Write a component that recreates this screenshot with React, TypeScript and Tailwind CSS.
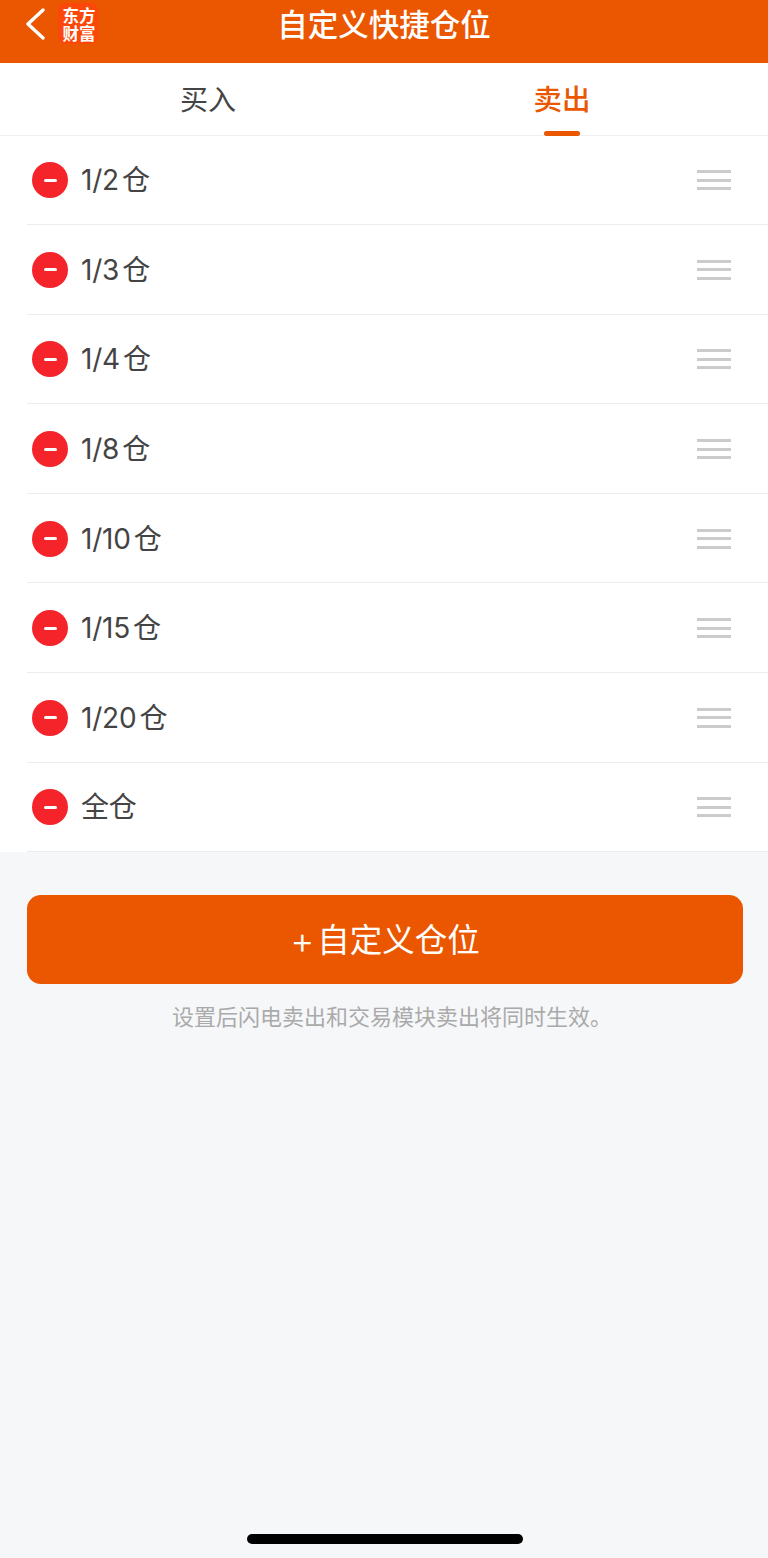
const font = { fontFamily: '"Inter", "Noto Sans CJK SC", sans-serif' };

const rows = ["1/2", "1/3", "1/4", "1/8", "1/10", "1/15", "1/20", "全"];

function Row({ label }: { label: string }) {
  return (
    <div className="ml-[27px] flex h-[89.6px] items-center border-b border-[#ececec] pr-[37px]">
      <div className="ml-[5px] mt-[1px] flex h-[36px] w-[36px] shrink-0 items-center justify-center rounded-full bg-[#f5242b]">
        <div className="h-[3px] w-[13px] rounded-full bg-white" />
      </div>
      <div className="ml-[13px] mt-[1px] flex-1 text-[28px] leading-[36px] tracking-[-0.2px] text-[#444444]">
        {label === "全" ? "全仓" : (
          <>
            {label}
            <span className="ml-[3px]">仓</span>
          </>
        )}
      </div>
      <div className="mt-[1px] flex w-[34px] flex-col gap-[5.5px]">
        <div className="h-[3px] bg-[#cbcbcb]" />
        <div className="h-[3px] bg-[#cbcbcb]" />
        <div className="h-[3px] bg-[#cbcbcb]" />
      </div>
    </div>
  );
}

export default function App() {
  return (
    <div className="relative flex h-[1558px] w-[768px] flex-col overflow-hidden bg-[#f6f7f9]" style={font}>
      <header className="relative flex h-[63px] shrink-0 items-center justify-center bg-[#eb5600]">
        <div className="absolute left-[25px] top-[8px]">
          <svg width="20" height="32" viewBox="0 0 20 32" fill="none">
            <path d="M18 2 L3 16 L18 30" stroke="#fff" strokeWidth="3.4" strokeLinecap="round" strokeLinejoin="round" />
          </svg>
        </div>
        <div
          className="absolute left-[58px] top-[3px] flex h-[41px] w-[40px] flex-col items-center justify-center rounded-[7px] bg-[#fb4708] pl-[2px] text-[16.5px] font-bold leading-[18px] text-white"
          style={{ fontFamily: '"Noto Sans CJK SC", serif' }}
        >
          <span>东方</span>
          <span>财富</span>
        </div>
        <h1 className="mb-[13px] text-[30.5px] font-medium leading-[40px] text-white">自定义快捷仓位</h1>
      </header>

      <div className="flex h-[72.5px] shrink-0 border-b border-[#f0f0f0] bg-white">
        <div className="flex w-[416px] justify-center pt-[17px] text-[28px] leading-[40px] text-[#444444]">买入</div>
        <div className="relative flex w-[292px] justify-center pt-[17px] text-[28.5px] font-medium leading-[40px] text-[#eb5600]">
          卖出
          <div className="absolute bottom-[-1px] left-[128px] h-[5px] w-[36px] rounded-full bg-[#eb5600]" />
        </div>
      </div>

      <div className="bg-white">
        {rows.map((r) => (
          <Row key={r} label={r} />
        ))}
      </div>

      <div className="pl-[27px] pr-[25px] pt-[42.5px]">
        <button className="flex h-[89px] w-full items-center justify-center rounded-[14px] bg-[#eb5600] pt-[3px] text-[32.5px] leading-[40px] text-white">
          <span className="mr-[3px] text-[37px] font-light">+</span>
          自定义仓位
        </button>
        <p className="mt-[18px] pl-[14px] text-center text-[22px] leading-[30px] text-[#aaaaaa]">
          设置后闪电卖出和交易模块卖出将同时生效。
        </p>
      </div>

      <div className="absolute left-[247px] top-[1534px] h-[10px] w-[276px] rounded-full bg-black" />
    </div>
  );
}
